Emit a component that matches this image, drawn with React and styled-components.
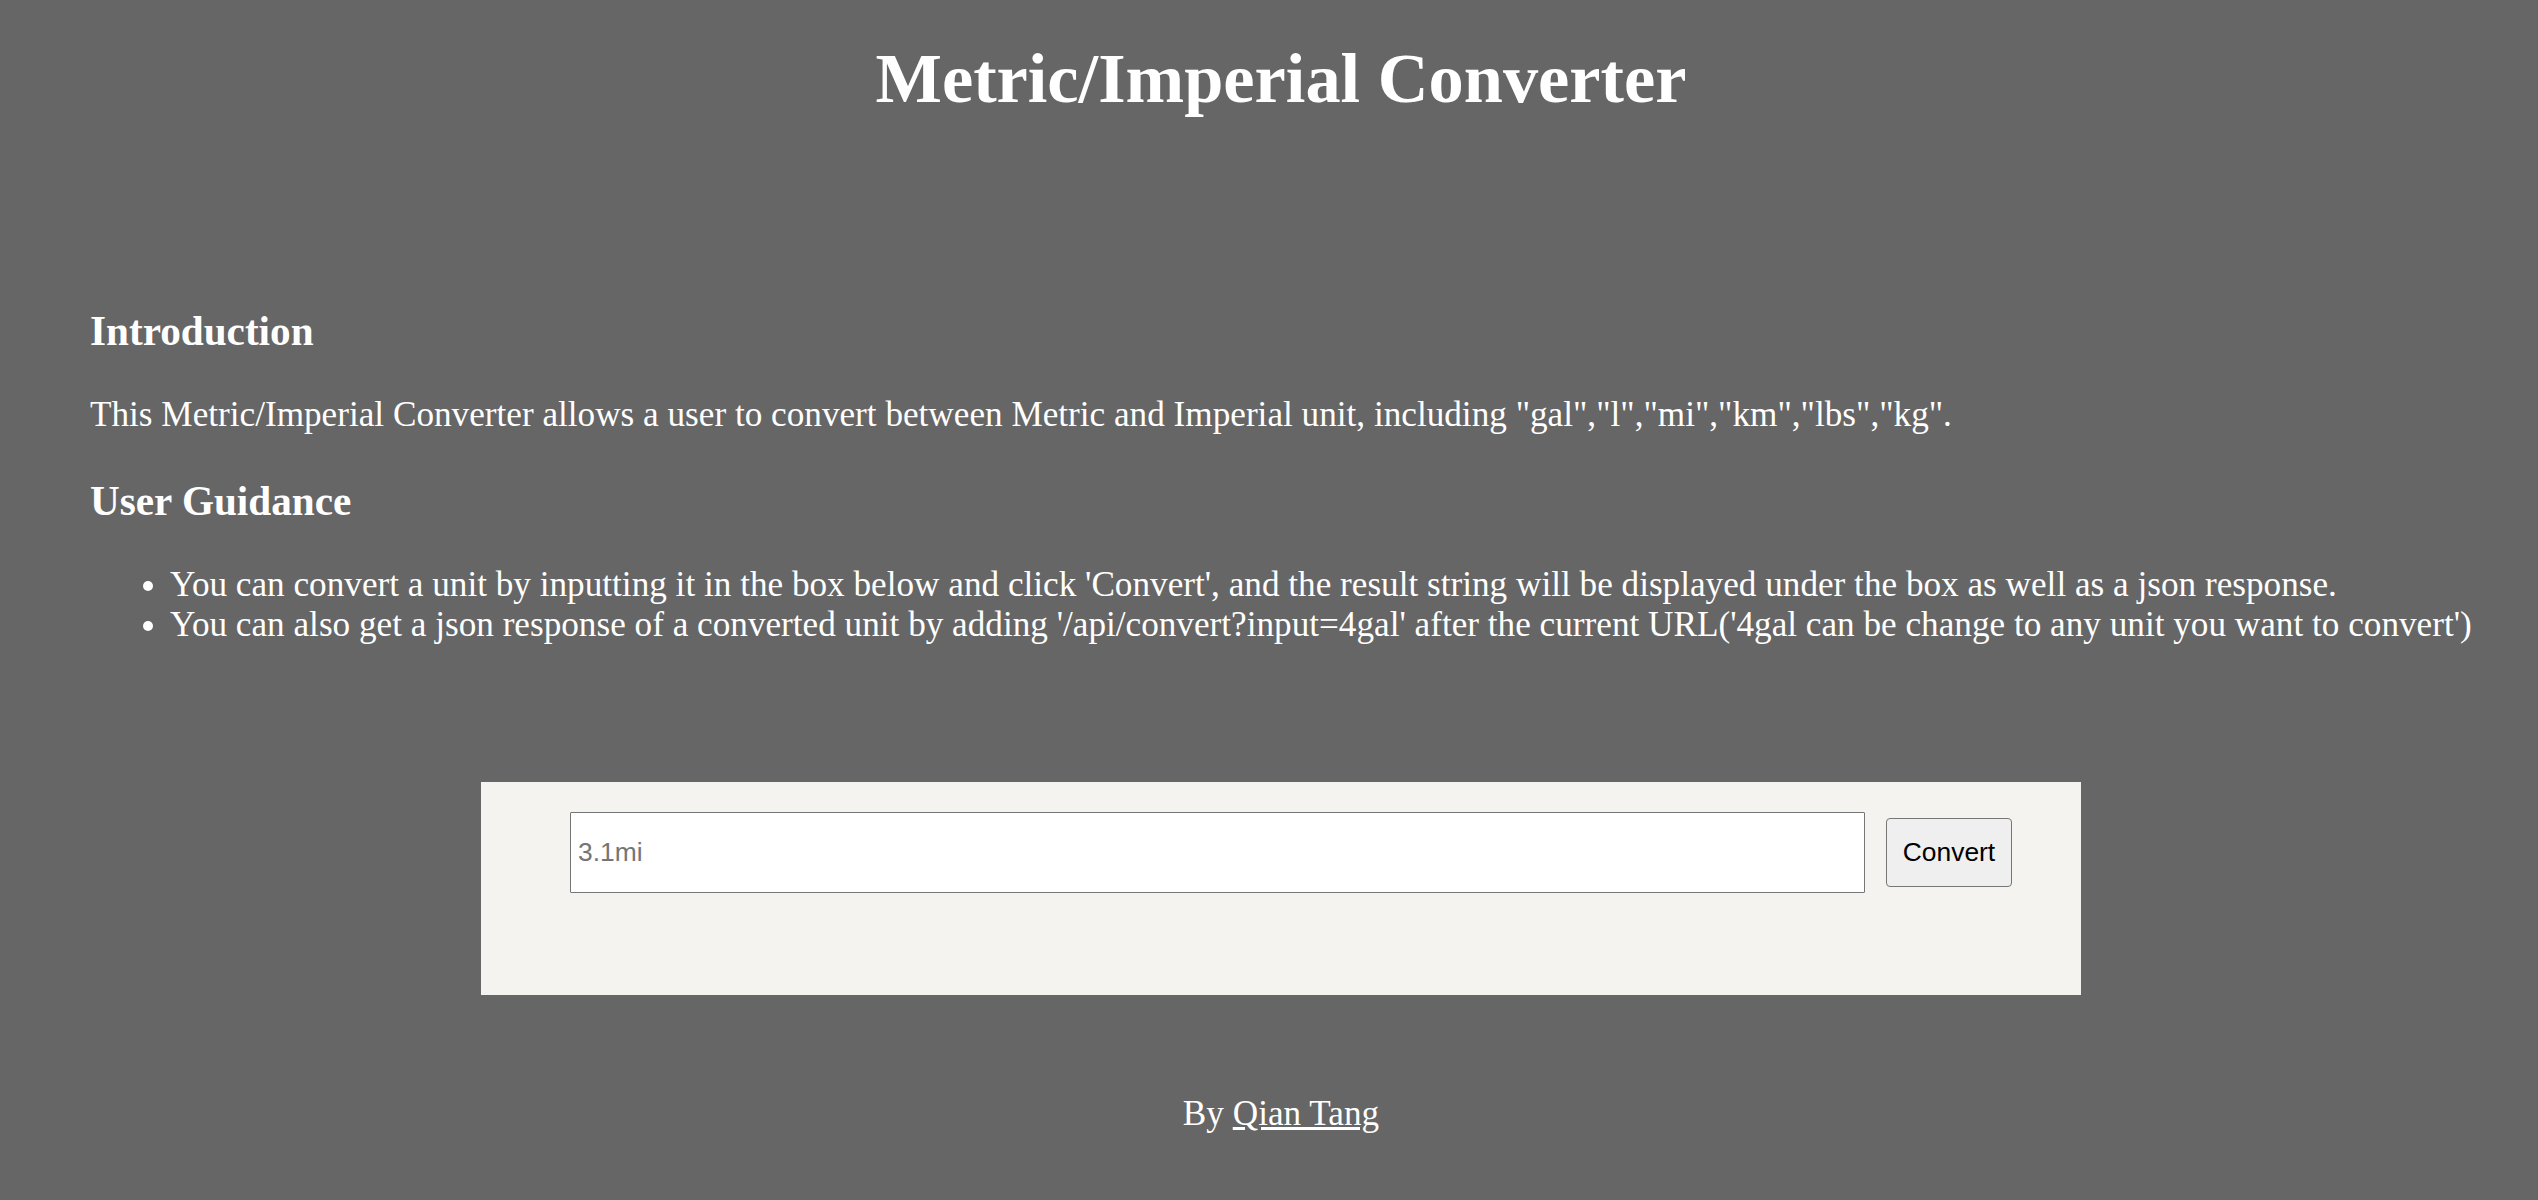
import React from "react"
import styled, { createGlobalStyle } from "styled-components"

const GlobalStyle = createGlobalStyle`
  html, body {
    margin: 0;
    padding: 0;
    background: #666666;
  }
  body {
    font-family: "Liberation Serif", "Times New Roman", serif;
    color: #ffffff;
  }
`

const Page = styled.div`
  min-height: 100vh;
  box-sizing: border-box;
  padding: 38px 18px 0 42px;
`

const Title = styled.h1`
  margin: 0;
  font-size: 70.4px;
  line-height: 1.15;
  font-weight: bold;
  text-align: center;
`

const Section = styled.section`
  margin-top: 189px;
  padding: 0 0 0 48px;
`

const Heading = styled.h3`
  margin: 0 0 ${p => p.$gap}px;
  font-size: 41.2px;
  line-height: 1.15;
  font-weight: bold;
`

const Text = styled.p`
  margin: 0 0 42px;
  font-size: 35.2px;
  line-height: 1.15;
`

const List = styled.ul`
  margin: 0;
  padding-left: 80px;
  font-size: 35.2px;
  line-height: 40px;
  white-space: nowrap;
`

const FormBox = styled.form`
  box-sizing: border-box;
  width: 1600px;
  height: 213px;
  margin: 137px auto 0;
  padding: 30px 69px 0 89px;
  background: #f4f3ef;
`

const Row = styled.div`
  display: flex;
  align-items: center;
  gap: 21px;
`

const Input = styled.input`
  flex: 1;
  box-sizing: border-box;
  height: 81px;
  padding: 0 7px;
  border: 1px solid #767676;
  border-radius: 1px;
  background: #ffffff;
  font-family: "Liberation Sans", Arial, sans-serif;
  font-size: 26.4px;
  color: #000000;
  outline: none;
  &::placeholder {
    color: #757575;
  }
`

const Button = styled.button`
  box-sizing: border-box;
  width: 126px;
  height: 69px;
  padding: 0 15px;
  border: 1px solid #767676;
  border-radius: 4px;
  background: #efefef;
  font-family: "Liberation Sans", Arial, sans-serif;
  font-size: 26.4px;
  color: #000000;
  cursor: pointer;
`

const Footer = styled.footer`
  margin-top: 99px;
  padding-bottom: 40px;
  text-align: center;
  font-size: 35.2px;
  line-height: 1.15;
  a {
    color: #ffffff;
  }
`

export default function App() {
  return (
    <>
      <GlobalStyle />
      <Page>
        <Title>Metric/Imperial Converter</Title>
        <Section>
          <Heading $gap={40}>Introduction</Heading>
          <Text>
            This Metric/Imperial Converter allows a user to convert between Metric and Imperial unit, including "gal","l","mi","km","lbs","kg".
          </Text>
          <Heading $gap={40}>User Guidance</Heading>
          <List>
            <li>You can convert a unit by inputting it in the box below and click 'Convert', and the result string will be displayed under the box as well as a json response.</li>
            <li>You can also get a json response of a converted unit by adding '/api/convert?input=4gal' after the current URL('4gal can be change to any unit you want to convert')</li>
          </List>
        </Section>
        <FormBox onSubmit={e => e.preventDefault()}>
          <Row>
            <Input type="text" placeholder="3.1mi" />
            <Button type="submit">Convert</Button>
          </Row>
        </FormBox>
        <Footer>
          By <a href="#">Qian Tang</a>
        </Footer>
      </Page>
    </>
  )
}
